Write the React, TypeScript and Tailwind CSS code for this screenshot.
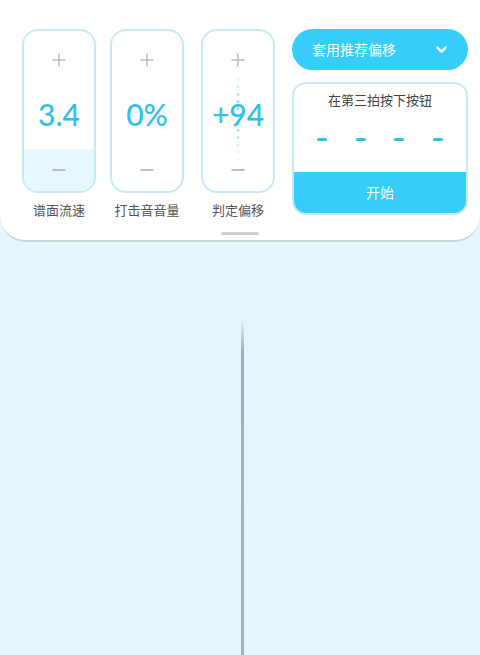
import React from 'react';
import { ChevronDown } from 'lucide-react';

const FONT = { fontFamily: '"Noto Sans", "Noto Sans CJK SC", sans-serif' };
const NUM_FONT = { fontFamily: 'Lato, "Noto Sans", sans-serif' };

function PlusIcon() {
  return (
    <svg width="14" height="14" viewBox="0 0 14 14">
      <path d="M7 0.5v13M0.5 7h13" stroke="#bdbdbd" strokeWidth="1.6" fill="none" />
    </svg>
  );
}

function MinusIcon() {
  return (
    <svg width="14" height="14" viewBox="0 0 14 14">
      <path d="M0.5 7h13" stroke="#bdbdbd" strokeWidth="1.8" fill="none" />
    </svg>
  );
}

interface StepperProps {
  value: string;
  label: string;
  filled?: boolean;
  dotted?: boolean;
  className?: string;
}

function Stepper({ value, label, filled, dotted, className }: StepperProps) {
  const dots = [0.25, 0.45, 0.7, 0.9, 1, 1, 0.9, 0.75, 0.6, 0.4, 0.2, 0.1];
  return (
    <div className={`flex flex-col items-center ${className ?? ''}`}>
      <div className="relative w-[74px] h-[164px] rounded-[16px] border-2 border-[#c4ebf5] overflow-hidden flex flex-col items-center bg-white">
        {filled && <div className="absolute left-0 right-0 bottom-0 h-[42px] bg-[#e6f8fd]" />}
        {dotted && (
          <div className="absolute left-1/2 top-[47px] -translate-x-1/2 flex flex-col gap-[4.3px]">
            {dots.map((o, i) => (
              <div key={i} className="w-[3px] h-[3px] rounded-full bg-[#8fdcf2]" style={{ opacity: o }} />
            ))}
          </div>
        )}
        <div className="relative mt-[22px]"><PlusIcon /></div>
        <div className="relative mt-[29px] text-[30px] leading-[36px] font-medium text-[#2fc1ee]" style={NUM_FONT}>
          {value}
        </div>
        <div className="relative mt-[31px]"><MinusIcon /></div>
      </div>
      <div className="mt-[8px] text-[13px] leading-[18px] text-[#555]">{label}</div>
    </div>
  );
}

export default function App() {
  return (
    <div className="w-[480px] h-[655px] bg-[#e3f5fd] flex flex-col overflow-hidden" style={FONT}>
      {/* Top settings panel */}
      <div className="bg-white rounded-b-[26px] border-b-2 border-[#cdd5d9] h-[242px] flex flex-col shrink-0">
        <div className="flex pt-[29px] pl-[22px] pr-[12px]">
          <Stepper value="3.4" label="谱面流速" filled />
          <Stepper value="0%" label="打击音音量" className="ml-[14px]" />
          <Stepper value="+94" label="判定偏移" dotted className="ml-[17px]" />

          <div className="ml-auto w-[176px] flex flex-col">
            <button className="h-[41px] rounded-full bg-[#36cdfa] flex items-center pl-[20px] pr-[18px] text-white text-[14px]">
              <span>套用推荐偏移</span>
              <ChevronDown className="ml-auto w-[17px] h-[17px]" strokeWidth={3} />
            </button>
            <div className="mt-[12px] h-[133px] rounded-[14px] border-2 border-[#c4ebf5] overflow-hidden flex flex-col">
              <div className="pt-[7px] text-center text-[13px] leading-[18px] text-[#444]">在第三拍按下按钮</div>
              <div className="flex justify-between px-[23px] mt-[29px]">
                {[0, 1, 2, 3].map((i) => (
                  <div key={i} className="w-[10px] h-[3px] rounded-full bg-[#2fc3ea]" />
                ))}
              </div>
              <button className="mt-auto h-[41px] bg-[#36cdfa] text-white text-[14px]">开始</button>
            </div>
          </div>
        </div>
        <div className="mx-auto mt-auto mb-[5px] w-[38px] h-[3px] rounded-full bg-[#cfcfcf]" />
      </div>

      {/* Lane area */}
      <div className="flex-1 flex justify-center">
        <div className="ml-[4px] mt-[76px] w-[3px] h-full bg-gradient-to-b from-transparent via-[#9fb2bc] via-[8%] to-[#a3b7c1]" />
      </div>
    </div>
  );
}
